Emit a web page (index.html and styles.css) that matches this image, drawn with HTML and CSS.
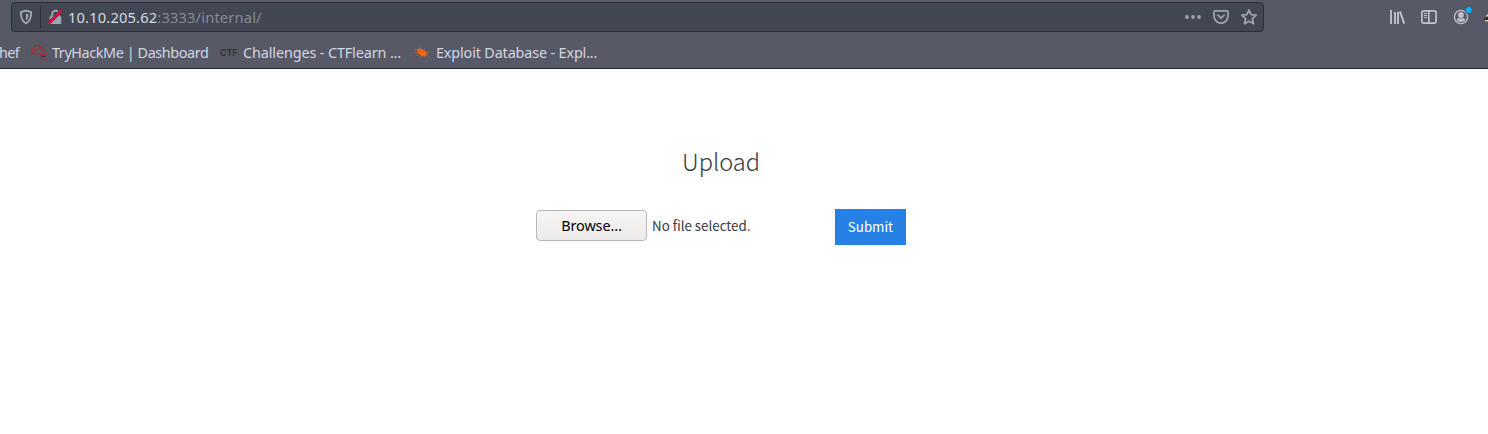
FILE: index.html
```html
<!DOCTYPE html>
<html lang="en">
<head>
<meta charset="utf-8">
<title>Upload</title>
<link rel="stylesheet" href="styles.css">
</head>
<body>
<header class="chrome">
  <div class="toolbar">
    <div class="urlbar">
      <svg class="shield" width="16" height="16" viewBox="0 0 16 16" fill="none" stroke="#a3aab6" stroke-width="1.8"><path d="M8 1.6 13.2 3.2C13.2 8.5 12.1 12.2 8 14.4 3.9 12.2 2.8 8.5 2.8 3.2Z" stroke-linejoin="round"/><path d="M8 4.6V11.6C9.8 10 10.4 8 10.5 5.2Z" fill="#a3aab6" stroke="none"/></svg>
      <span class="divider"></span>
      <svg class="lock" width="16" height="16" viewBox="0 0 16 16" fill="none"><path d="M4.2 8V5a3.3 3.3 0 0 1 6.6 0v3" stroke="#a0a6b1" stroke-width="1.9"/><rect x="1.5" y="7.2" width="11.8" height="7.8" rx="1" fill="#a0a6b1"/><path d="M0 15 13.8 1.2" stroke="#414753" stroke-width="3.4"/><path d="M.8 14.2 13.2 1.8" stroke="#ff0039" stroke-width="1.9" stroke-linecap="round"/></svg>
      <span class="url"><span class="host">10.10.205.62</span>:3333/internal/</span>
      <div class="actions">
        <svg width="18" height="16" viewBox="0 0 18 16" fill="#9da4b0"><circle cx="3" cy="8" r="1.9"/><circle cx="9" cy="8" r="1.9"/><circle cx="15" cy="8" r="1.9"/></svg>
        <svg width="16" height="16" viewBox="0 0 16 16" fill="none" stroke="#9da4b0" stroke-width="1.8" stroke-linecap="round" stroke-linejoin="round"><path d="M2 1.9h12q1 0 1 1v4.2a7 7 0 0 1-14 0V2.9q0-1 1-1Z"/><path d="m4.8 6.2 3.2 3 3.2-3"/></svg>
        <svg width="18" height="18" viewBox="0 0 18 18" fill="none" stroke="#9da4b0" stroke-width="1.8" stroke-linejoin="round"><path d="m9 2 2.1 4.7 5.1.5-3.8 3.5 1.1 5.1L9 13.2l-4.5 2.6 1.1-5.1-3.8-3.5 5.1-.5Z"/></svg>
      </div>
    </div>
    <div class="tools">
      <svg width="16" height="16" viewBox="0 0 16 16" fill="none" stroke="#bdc2ce" stroke-width="2"><path d="M2 1v14M6 3v12M9 3v12" stroke-width="1.9"/><path d="M11 2.5l4.2 12.2"/></svg>
      <svg width="16" height="16" viewBox="0 0 16 16" fill="none" stroke="#bdc2ce" stroke-width="1.7"><rect x=".9" y="1.9" width="14.2" height="12.2" rx="2"/><path d="M7.8 2v12"/><path d="M3 4.5h3M3 6.5h3M3 8.5h3" stroke-width="1"/></svg>
      <svg class="account" width="22" height="22" viewBox="0 0 22 22" fill="none"><circle cx="8" cy="12" r="6.6" stroke="#bdc2ce" stroke-width="1.3"/><circle cx="8" cy="10" r="2.9" fill="#bdc2ce"/><path d="M3.5 14.7q1.1-1.6 2.6-1.7 1.9 1 3.8 0 1.5.1 2.6 1.7Q11.1 17 8 17t-4.5-2.3Z" fill="#bdc2ce"/><circle cx="15.8" cy="5" r="4" fill="#4c596a"/><circle cx="15.8" cy="5" r="3" fill="#00b3fa"/></svg>
      <svg class="extension" width="4" height="12" viewBox="0 0 4 12"><path d="M0 8 1.5 5.5 4 4v6H1Z" fill="#302b2b"/><path d="M1.5 4.5 4 2v2.5ZM1 8h3v1.5H1Z" fill="#f3d4b1"/></svg>
    </div>
  </div>
  <nav class="bookmarks">
    <span class="bookmark chef">hef</span>
    <span class="bookmark thm">
      <svg width="18" height="18" viewBox="0 0 18 18" fill="none"><path d="M7 9.7H3.7A3 3 0 0 1 3.7 4Q4.7 1.2 7.7 1.5q2.2.2 3 2.2 3-.3 4.2 2.7M4.2 7.3q1.3-2 3.3-1M10.7 3.7q-1.2.1-2 1.4" stroke="#be1f29" stroke-width="1.2"/><path d="M9.5 8h2M13 8h3M8.8 10.2h4M14 10.2h2.2" stroke="#a5343b" stroke-width="1.3"/><path d="M11 12.3h5" stroke="#303640" stroke-width="1.2"/><path d="M9.5 14h2M13 14h3M11 16h2M14.5 16h1.5" stroke="#98333b" stroke-width="1.2"/></svg>
      <span class="thm-label">TryHackMe | Dashboard</span>
    </span>
    <span class="bookmark ctf"><span class="ctf-logo">CTF</span><span class="ctf-label">Challenges - CTFlearn ...</span></span>
    <span class="bookmark edb">
      <svg width="16" height="16" viewBox="0 0 16 16" fill="none"><path d="M3 4.2Q5.6 2.9 8.7 4.3q3 1.4 4.1 4.2.1 2.2-1.7 3.1-3.4.1-6-2.4Q3 6.8 3 4.2Z" fill="#f36412"/><path d="M4 5 1 4.1M4.3 7.2.8 7.6M5.5 9.2 2.1 10.5M8 10.4 6 12.8M7 4.2 5.8 2.2M9.3 5 11 3.6M11.6 7.3l3.6.1M12.5 9.4l2.3 2.5" stroke="#ca6738" stroke-width=".7"/></svg>
      <span class="edb-label">Exploit Database - Expl...</span>
    </span>
  </nav>
</header>
<main class="page">
  <h1 class="title">Upload</h1>
  <form class="upload" onsubmit="return false">
    <button class="browse" type="button">Browse…</button>
    <span class="filename">No file selected.</span>
    <button class="submit" type="submit">Submit</button>
  </form>
</main>
</body>
</html>
```
FILE: styles.css
```css
* { box-sizing: border-box; }
body { margin: 0; width: 1488px; height: 434px; overflow: hidden; background: #fff; font-family: "Noto Sans", sans-serif; }
svg { display: block; flex: none; }
.chrome { height: 69px; background: #585966; border-bottom: 1px solid #292a35; overflow: hidden; }
.toolbar { display: flex; height: 36px; padding: 2px 0 0 11px; }
.urlbar { display: flex; align-items: center; flex: none; width: 1253px; height: 30px; padding: 0 5px 0 6px; background: #414753; border: 1px solid #2b2e3b; border-radius: 4px; }
.divider { width: 1px; height: 22px; margin: 0 7px 0 6px; background: #2c303b; }
.url { margin-left: 4px; font-size: 14.67px; line-height: 20px; letter-spacing: .17px; white-space: nowrap; color: #878b96; }
.host { color: #d5dae5; }
.actions { display: flex; align-items: center; gap: 11px; margin-left: auto; }
.tools { display: flex; align-items: flex-start; gap: 16px; padding: 7px 0 0 125px; }
.account { margin: -4px 0 0; }
.extension { margin: 3px 0 0 -7px; }
.bookmarks { display: flex; align-items: center; height: 31px; margin-top: 1px; font-size: 14.4px; line-height: 20px; color: #d2d6e4; white-space: nowrap; }
.bookmark { display: flex; align-items: center; flex: none; }
.chef { width: 30px; letter-spacing: -.6px; text-indent: -1px; }
.thm { width: 190px; gap: 4px; }
.thm-label { letter-spacing: -.41px; }
.ctf { width: 194px; }
.ctf-label { letter-spacing: -.12px; }
.edb-label { letter-spacing: -.15px; }
.ctf-logo { width: 23px; padding-top: 1px; font: bold 9px/16px Inter, sans-serif; letter-spacing: -.2px; color: #333437; }
.edb { gap: 6px; }
.thm svg, .edb svg { margin-top: 1px; }
.page { display: flex; flex-direction: column; padding: 70px 0 0 536px; font-family: "Noto Sans CJK SC", sans-serif; }
.title { width: 370px; height: 44px; margin: 0; font-size: 23.6px; font-weight: 300; line-height: 44px; text-align: center; color: #343a40; }
.upload { display: flex; align-items: center; width: 370px; height: 36px; margin-top: 26px; }
.browse { width: 111px; height: 31px; padding: 0; border: 1px solid #bdb6b0; border-radius: 4px; background: linear-gradient(#f6f5f4, #edebe9); font: 14.4px/20px "Noto Sans", sans-serif; color: #000; margin-top: -3px; letter-spacing: -.1px; }
.filename { margin: -3px 0 0 5px; font-size: 13.33px; line-height: 20px; color: #373a3c; white-space: nowrap; }
.submit { width: 71px; height: 36px; margin-left: auto; padding: 0; border: 0; background: #2780e3; color: #fff; font: 13.33px/20px "Noto Sans CJK SC", sans-serif; }
```
